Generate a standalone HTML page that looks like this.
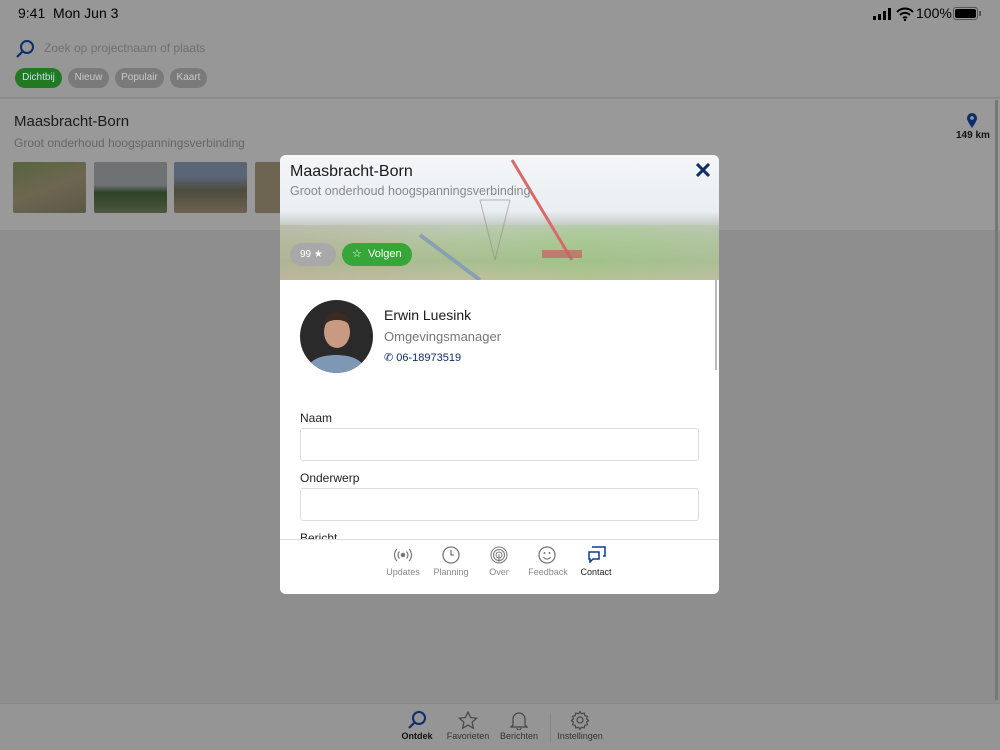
<!DOCTYPE html>
<html><head><meta charset="utf-8">
<style>
*{margin:0;padding:0;box-sizing:border-box}
body{width:1000px;height:750px;overflow:hidden;background:#8e8e8e;font-family:"Liberation Sans",sans-serif;position:relative}
.abs{position:absolute}
.hdr{left:0;top:0;width:1000px;height:98px;background:#979797;border-bottom:1px solid #8a8a8a}
.card{left:0;top:99px;width:1000px;height:131px;background:#999}
.tab{left:0;top:703px;width:1000px;height:47px;background:#959595;border-top:1px solid #888}
.pill{top:68px;height:20px;border-radius:10px;background:#7a7a7a;color:#c8c8c8;font-size:10px;line-height:20px;text-align:center}
.thumb{top:162px;width:73px;height:51px;border-radius:2px}
.modal{left:280px;top:155px;width:439px;height:439px;background:#fff;border-radius:6px;overflow:hidden}
.label{font-size:12px;color:#222;left:20px}
.inp{left:20px;width:399px;height:33px;border:1px solid #ddd;border-radius:3px}
.ti{text-align:center;font-size:9px;color:#888;width:50px}
.bt{text-align:center;font-size:9px;color:#333;width:70px}
</style></head><body>
<div class="abs hdr"></div>
<div class="abs" style="left:18px;top:5px;font-size:14px;color:#000">9:41&nbsp; Mon Jun 3</div>
<div class="abs" style="left:873px;top:8px;width:20px;height:12px">
 <div class="abs" style="left:0;top:8px;width:3px;height:4px;background:#000"></div>
 <div class="abs" style="left:5px;top:6px;width:3px;height:6px;background:#000"></div>
 <div class="abs" style="left:10px;top:3px;width:3px;height:9px;background:#000"></div>
 <div class="abs" style="left:15px;top:0;width:3px;height:12px;background:#000"></div>
</div>
<svg class="abs" style="left:896px;top:7px" width="18" height="14" viewBox="0 0 18 14"><path d="M1 5a11 11 0 0 1 16 0M4 8a7 7 0 0 1 10 0M7 11a3 3 0 0 1 4 0" stroke="#000" stroke-width="2" fill="none"/><circle cx="9" cy="13" r="1.2"/></svg>
<div class="abs" style="left:916px;top:5px;font-size:14px;color:#000">100%</div>
<div class="abs" style="left:953px;top:7px;width:25px;height:13px;border:1px solid #555;border-radius:3px;padding:1px"><div style="width:100%;height:100%;background:#000;border-radius:2px"></div></div>
<div class="abs" style="left:979px;top:11px;width:2px;height:5px;background:#555"></div>
<svg class="abs" style="left:15px;top:39px" width="20" height="20" viewBox="0 0 20 20"><circle cx="12" cy="8" r="6" stroke="#0d2d6b" stroke-width="2" fill="none"/><path d="M7.5 12.5L2 18" stroke="#0d2d6b" stroke-width="2.2"/></svg>
<div class="abs" style="left:44px;top:41px;font-size:12px;color:#707070">Zoek op projectnaam of plaats</div>
<div class="abs pill" style="left:15px;width:47px;background:#217a21;color:#cde">Dichtbij</div>
<div class="abs pill" style="left:68px;width:41px">Nieuw</div>
<div class="abs pill" style="left:115px;width:49px">Populair</div>
<div class="abs pill" style="left:170px;width:37px">Kaart</div>
<div class="abs card"></div>
<div class="abs" style="left:14px;top:113px;font-size:15px;color:#1a1a1a">Maasbracht-Born</div>
<div class="abs" style="left:14px;top:136px;font-size:12px;color:#666">Groot onderhoud hoogspanningsverbinding</div>
<div class="abs thumb" style="left:13px;background:linear-gradient(160deg,#55663f,#6e6650 50%,#5b584a)"></div>
<div class="abs thumb" style="left:94px;background:linear-gradient(#6e7275 45%,#2f4328 60%,#4d5640)"></div>
<div class="abs thumb" style="left:174px;background:linear-gradient(#5a6575 30%,#4c4c3e 55%,#6e6250)"></div>
<div class="abs thumb" style="left:255px;width:30px;background:#6d6451"></div>
<svg class="abs" style="left:966px;top:113px" width="12" height="15" viewBox="0 0 12 15"><path d="M6 15C2 9 1 7 1 5a5 5 0 0 1 10 0c0 2-1 4-5 10z" fill="#0d2d6b"/><circle cx="6" cy="5" r="1.8" fill="#999"/></svg>
<div class="abs" style="left:956px;top:130px;font-size:10px;color:#111;font-weight:bold">149 km</div>
<div class="abs" style="left:995px;top:100px;width:3px;height:600px;background:#777"></div>
<div class="abs tab"></div>
<svg class="abs" style="left:407px;top:710px" width="20" height="20" viewBox="0 0 20 20"><circle cx="12" cy="8" r="6" stroke="#0d2d6b" stroke-width="2" fill="none"/><path d="M7.5 12.5L2 18" stroke="#0d2d6b" stroke-width="2.2"/></svg>
<svg class="abs" style="left:458px;top:711px" width="20" height="18" viewBox="0 0 20 18"><path d="M10 1l2.6 5.6 6 .6-4.5 4 1.3 6-5.4-3.1-5.4 3.1 1.3-6-4.5-4 6-.6z" stroke="#444" fill="none" stroke-width="1.2"/></svg>
<svg class="abs" style="left:510px;top:710px" width="18" height="20" viewBox="0 0 18 20"><path d="M3 15V9a6 6 0 0 1 12 0v6l2 2H1zM7 18a2 2 0 0 0 4 0" stroke="#444" fill="none" stroke-width="1.2"/></svg>
<svg class="abs" style="left:570px;top:710px" width="20" height="20" viewBox="0 0 20 20"><circle cx="10" cy="10" r="3" stroke="#444" fill="none" stroke-width="1.2"/><path d="M10 1.5l1.5 2.3 2.7-.8.5 2.7 2.7.6-.8 2.7 2 1.5-2 1.5.8 2.7-2.7.6-.5 2.7-2.7-.8-1.5 2.3-1.5-2.3-2.7.8-.5-2.7-2.7-.6.8-2.7-2-1.5 2-1.5-.8-2.7 2.7-.6.5-2.7 2.7.8z" stroke="#444" fill="none" stroke-width="1.1"/></svg>
<div class="abs bt" style="left:382px;top:731px;font-weight:bold;color:#111">Ontdek</div>
<div class="abs bt" style="left:433px;top:731px">Favorieten</div>
<div class="abs bt" style="left:484px;top:731px">Berichten</div>
<div class="abs bt" style="left:545px;top:731px">Instellingen</div>
<div class="abs" style="left:550px;top:713px;width:1px;height:30px;background:#888"></div>

<div class="abs modal">
 <div class="abs" style="left:0;top:0;width:439px;height:125px;background:linear-gradient(180deg,#f4f6f8 0%,#e9eef2 45%,#c8cfc8 55%,#b5c7a4 70%,#a9bf95 85%,#c9c0a6 100%)"></div>
 <div class="abs" style="left:0;top:70px;width:439px;height:55px;background:linear-gradient(90deg,rgba(180,170,150,.5),rgba(160,190,130,.2) 40%,rgba(150,200,120,.4) 70%,rgba(170,190,150,.4))"></div>
 <svg class="abs" style="left:0;top:0" width="439" height="125"><path d="M232 5L292 105" stroke="#d86a6a" stroke-width="3"/><path d="M200 45L215 105M230 45L215 105M200 45H230" stroke="rgba(140,140,140,.6)" fill="none"/><path d="M140 80C160 95 180 110 200 125" stroke="#8aa0b0" stroke-width="4" fill="none"/><rect x="262" y="95" width="40" height="8" fill="#c76060" opacity=".7"/></svg>
 <div class="abs" style="left:10px;top:8px;font-size:16px;color:#1a1a1a">Maasbracht-Born</div>
 <div class="abs" style="left:10px;top:29px;font-size:12.5px;color:#888">Groot onderhoud hoogspanningsverbinding</div>
 <svg class="abs" style="left:416px;top:8px" width="14" height="14" viewBox="0 0 14 14"><path d="M1 1l12 12M13 1L1 13" stroke="#0d2d6b" stroke-width="3"/></svg>
 <div class="abs" style="left:10px;top:88px;width:46px;height:23px;border-radius:12px;background:#a8a8a8;color:#fff;font-size:10px;line-height:23px;padding-left:10px">99 ★</div>
 <div class="abs" style="left:62px;top:88px;width:70px;height:23px;border-radius:12px;background:#35a637;color:#fff;font-size:11px;line-height:23px;padding-left:10px">☆&nbsp; Volgen</div>
 <div class="abs" style="left:435px;top:125px;width:2px;height:90px;background:#bbb"></div>
 <svg class="abs" style="left:20px;top:145px" width="73" height="73" viewBox="0 0 73 73"><defs><clipPath id="c"><circle cx="36.5" cy="36.5" r="36.5"/></clipPath></defs><g clip-path="url(#c)"><rect width="73" height="73" fill="#2a2a2a"/><path d="M5 73c3-14 17-18 31-18s28 4 31 18z" fill="#7d97b5"/><ellipse cx="37" cy="32" rx="13" ry="16" fill="#c99a82"/><path d="M24 26c0-10 6-14 13-14s13 4 13 14c-3-5-8-6-13-6s-10 1-13 6z" fill="#3a2a20"/></g></svg>
 <div class="abs" style="left:104px;top:152px;font-size:14px;color:#1a1a1a">Erwin Luesink</div>
 <div class="abs" style="left:104px;top:174px;font-size:13px;color:#777">Omgevingsmanager</div>
 <div class="abs" style="left:104px;top:196px;font-size:11px;color:#0d2d6b">&#9990; 06-18973519</div>
 <div class="abs label" style="top:256px">Naam</div>
 <div class="abs inp" style="top:273px"></div>
 <div class="abs label" style="top:316px">Onderwerp</div>
 <div class="abs inp" style="top:333px"></div>
 <div class="abs label" style="top:376px">Bericht</div>
 <div class="abs" style="left:0;top:384px;width:439px;height:55px;background:#fff;border-top:1px solid #ddd"></div>
 <svg class="abs" style="left:113px;top:392px" width="20" height="16" viewBox="0 0 20 16"><circle cx="10" cy="8" r="2.3" fill="#777"/><path d="M6.5 4.5a5 5 0 0 0 0 7M13.5 4.5a5 5 0 0 1 0 7M4 2a8.5 8.5 0 0 0 0 12M16 2a8.5 8.5 0 0 1 0 12" stroke="#777" fill="none" stroke-width="1.2"/></svg>
 <svg class="abs" style="left:162px;top:391px" width="18" height="18" viewBox="0 0 18 18"><circle cx="9" cy="9" r="8" stroke="#777" fill="none" stroke-width="1.3"/><path d="M9 4v5h3" stroke="#777" fill="none" stroke-width="1.3"/></svg>
 <svg class="abs" style="left:210px;top:391px" width="18" height="18" viewBox="0 0 18 18"><g stroke="#777" fill="none" stroke-width="1"><circle cx="9" cy="9" r="8"/><circle cx="9" cy="9" r="5.5"/><circle cx="9" cy="9" r="3"/><path d="M9 8v8"/></g></svg>
 <svg class="abs" style="left:258px;top:391px" width="18" height="18" viewBox="0 0 18 18"><circle cx="9" cy="9" r="8" stroke="#777" fill="none" stroke-width="1.3"/><circle cx="6.5" cy="7" r="1" fill="#777"/><circle cx="11.5" cy="7" r="1" fill="#777"/><path d="M5.5 11a4 4 0 0 0 7 0" stroke="#777" fill="none" stroke-width="1.2"/></svg>
 <svg class="abs" style="left:307px;top:391px" width="19" height="17" viewBox="0 0 19 17"><path d="M5 1h13v9h-2M2 6h10v7H6l-3 3v-3H2z" stroke="#0d3a8a" fill="none" stroke-width="1.5"/></svg>
 <div class="abs ti" style="left:98px;top:412px">Updates</div>
 <div class="abs ti" style="left:146px;top:412px">Planning</div>
 <div class="abs ti" style="left:194px;top:412px">Over</div>
 <div class="abs ti" style="left:243px;top:412px">Feedback</div>
 <div class="abs ti" style="left:291px;top:412px;color:#222">Contact</div>
</div>
</body></html>
